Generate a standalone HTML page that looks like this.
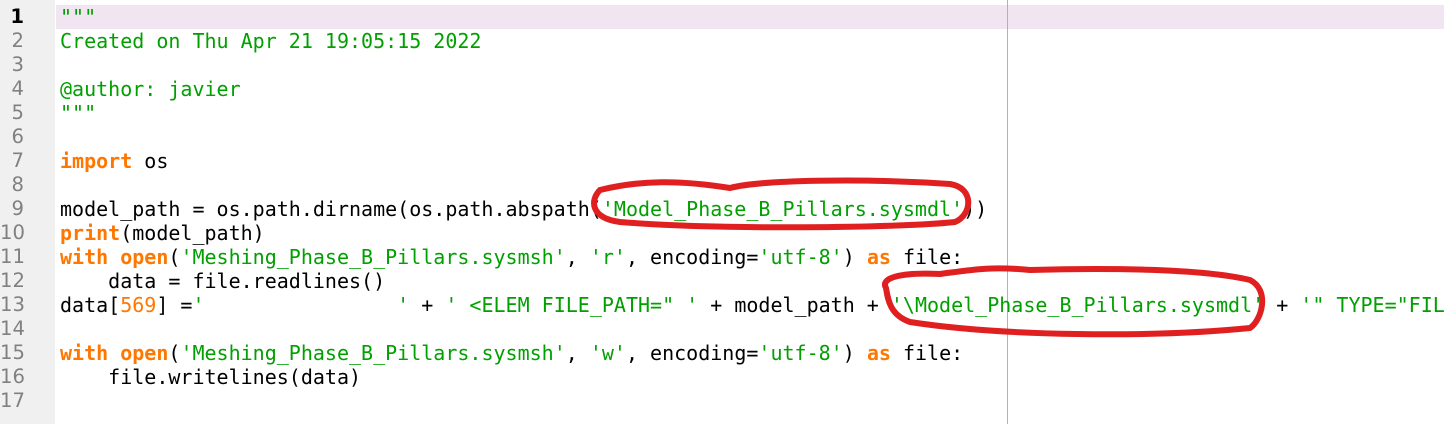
<!DOCTYPE html>
<html><head><meta charset="utf-8"><style>
html,body{margin:0;padding:0;background:#fff;width:1444px;height:424px;overflow:hidden;position:relative}
.g{position:absolute;left:0;top:0;width:55px;height:424px;background:#f0f0f0}
.hl{position:absolute;left:56px;top:5px;width:1388px;height:24px;background:#f1e5f1}
.edge{position:absolute;left:1007px;top:0;width:1px;height:424px;background:#c8a8a8}
.n{position:absolute;left:0;width:24px;text-align:right;font:19.6px/24px "DejaVu Sans","Liberation Sans",sans-serif;color:#808080}
.c{position:absolute;left:60px;top:5px;font:20px/24px "DejaVu Sans Mono","Liberation Mono",monospace;white-space:pre;color:#000}
.s{color:#00a000}.k{color:#ff7700;font-weight:bold}.d{color:#ff7700}
</style></head><body>
<div class="g"></div><div class="hl"></div><div class="edge"></div>
<div class="n" style="top:5px;color:#000;font-weight:bold">1</div>
<div class="n" style="top:29px">2</div><div class="n" style="top:53px">3</div><div class="n" style="top:77px">4</div><div class="n" style="top:101px">5</div><div class="n" style="top:125px">6</div><div class="n" style="top:149px">7</div><div class="n" style="top:173px">8</div><div class="n" style="top:197px">9</div><div class="n" style="top:221px">10</div><div class="n" style="top:245px">11</div><div class="n" style="top:269px">12</div><div class="n" style="top:293px">13</div><div class="n" style="top:317px">14</div><div class="n" style="top:341px">15</div><div class="n" style="top:365px">16</div><div class="n" style="top:389px">17</div>
<div class="c"><span class="s">"""
Created on Thu Apr 21 19:05:15 2022

@author: javier
"""</span>

<span class="k">import</span> os

model_path = os.path.dirname(os.path.abspath(<span class="s">'Model_Phase_B_Pillars.sysmdl'</span>))
<span class="k">print</span>(model_path)
<span class="k">with</span> <span class="k">open</span>(<span class="s">'Meshing_Phase_B_Pillars.sysmsh'</span>, <span class="s">'r'</span>, encoding=<span class="s">'utf-8'</span>) <span class="k">as</span> file:
    data = file.readlines()
data[<span class="d">569</span>] =<span class="s">'                '</span> + <span class="s">' &lt;ELEM FILE_PATH=" '</span> + model_path + <span class="s">'\Model_Phase_B_Pillars.sysmdl'</span> + <span class="s">'" TYPE="FILE"'</span>

<span class="k">with</span> <span class="k">open</span>(<span class="s">'Meshing_Phase_B_Pillars.sysmsh'</span>, <span class="s">'w'</span>, encoding=<span class="s">'utf-8'</span>) <span class="k">as</span> file:
    file.writelines(data)
</div>
<svg style="position:absolute;left:0;top:0" width="1444" height="424" fill="none" stroke="#e02020" stroke-width="6" stroke-linecap="round">
<path d="M600 190 C640 180 680 180 730 188 C760 180 860 178 950 184 C975 188 972 215 955 222 C900 228 720 230 620 222 C590 218 590 200 600 190 Z"/>
<path d="M886 288 C880 278 900 272 940 274 C970 270 990 266 1030 270 C1100 268 1200 268 1250 280 C1270 290 1262 320 1250 328 C1150 338 1000 336 910 322 C890 315 888 300 886 288 Z"/>
</svg>
</body></html>
